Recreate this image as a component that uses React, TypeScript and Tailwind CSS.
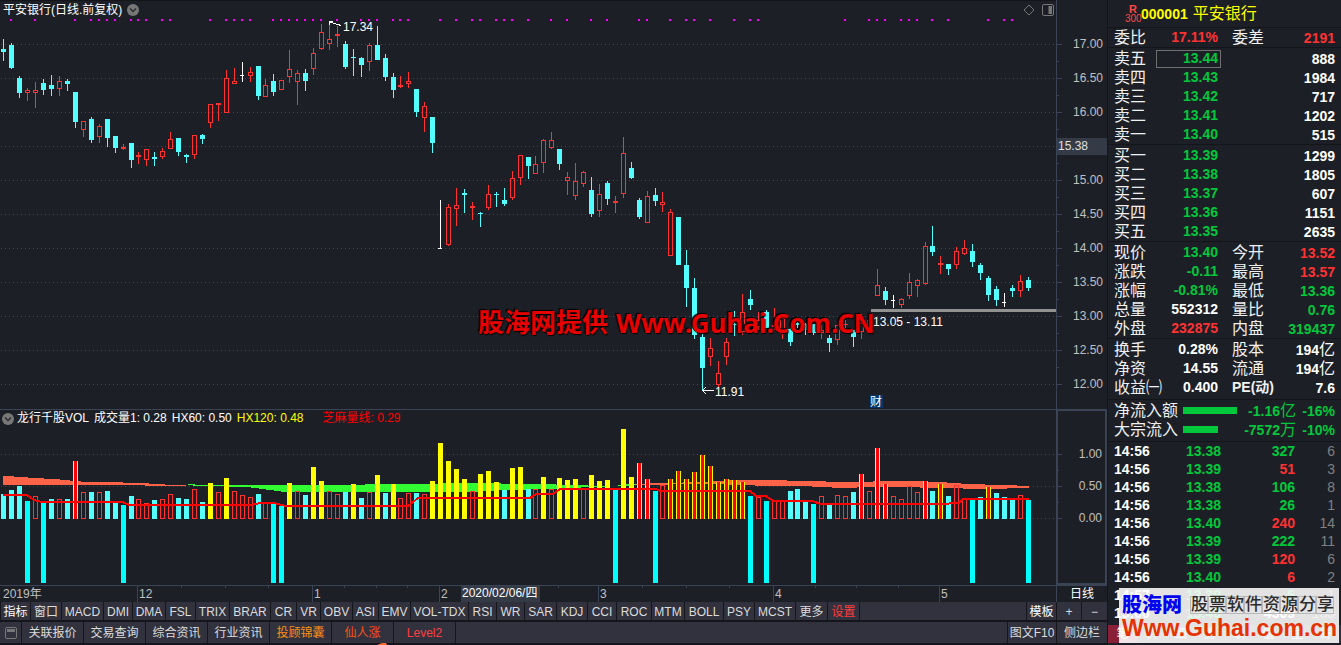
import clsx from "clsx";

type Kind = "c" | "r" | "w";
type Candle = [high: number, top: number, bottom: number, low: number, kind: Kind];

const CANDLES: Candle[] = [
  [39, 49, 52, 61, "c"], [43, 45, 68, 69, "c"], [76, 78, 93, 98, "c"], [88, 90, 93, 101, "r"],
  [82, 90, 93, 108, "r"], [79, 83, 90, 95, "c"], [75, 85, 89, 96, "c"], [76, 81, 89, 96, "r"],
  [79, 81, 84, 91, "c"], [92, 92, 122, 128, "c"], [121, 121, 130, 137, "r"], [117, 119, 140, 143, "c"],
  [124, 126, 137, 143, "r"], [119, 119, 138, 147, "c"], [136, 136, 148, 153, "c"], [144, 147, 149, 150, "r"],
  [143, 143, 160, 168, "c"], [152, 155, 157, 164, "r"], [149, 149, 160, 166, "r"], [152, 157, 159, 166, "c"],
  [148, 151, 157, 159, "r"], [132, 139, 149, 149, "r"], [138, 138, 152, 156, "c"], [154, 155, 157, 163, "c"],
  [135, 135, 155, 159, "r"], [134, 135, 139, 144, "c"], [104, 104, 123, 128, "r"], [103, 103, 105, 121, "r"],
  [70, 78, 113, 113, "r"], [68, 81, 84, 84, "r"], [62, 75, 76, 82, "w"], [67, 72, 76, 82, "r"],
  [66, 66, 96, 100, "c"], [79, 85, 97, 97, "r"], [74, 81, 92, 96, "c"], [80, 80, 90, 90, "r"],
  [50, 69, 77, 83, "r"], [70, 73, 82, 105, "r"], [69, 73, 81, 91, "c"], [48, 53, 69, 75, "r"],
  [24, 32, 49, 50, "r"], [24, 39, 44, 50, "r"], [26, 34, 36, 47, "r"], [41, 44, 67, 69, "c"],
  [49, 57, 58, 76, "c"], [57, 58, 65, 77, "c"], [43, 45, 62, 71, "r"], [26, 45, 60, 60, "c"],
  [54, 58, 77, 81, "c"], [73, 77, 90, 98, "c"], [76, 85, 87, 88, "r"], [72, 81, 84, 88, "r"],
  [89, 89, 112, 117, "c"], [102, 106, 118, 132, "r"], [117, 117, 143, 153, "c"], [200, 248, 249, 249, "w"],
  [204, 207, 245, 246, "r"], [188, 205, 209, 226, "r"], [189, 193, 195, 213, "c"], [202, 206, 208, 220, "r"],
  [212, 213, 214, 227, "c"], [185, 194, 208, 210, "r"], [192, 194, 195, 207, "c"], [188, 200, 204, 206, "c"],
  [171, 178, 198, 200, "r"], [155, 155, 178, 185, "r"], [157, 157, 166, 179, "c"], [156, 164, 174, 174, "r"],
  [139, 140, 163, 173, "r"], [132, 140, 148, 149, "r"], [149, 149, 164, 170, "c"], [172, 177, 181, 195, "r"],
  [163, 181, 196, 200, "r"], [171, 172, 184, 187, "r"], [177, 190, 214, 217, "c"], [184, 194, 211, 217, "r"],
  [181, 183, 199, 205, "c"], [196, 201, 203, 213, "r"], [137, 153, 194, 198, "r"], [162, 168, 178, 179, "c"],
  [198, 200, 217, 219, "c"], [191, 196, 223, 223, "r"], [188, 195, 201, 206, "c"], [192, 202, 205, 212, "r"],
  [209, 212, 256, 256, "r"], [217, 217, 265, 265, "c"], [250, 265, 288, 307, "c"], [278, 288, 335, 339, "c"],
  [333, 337, 368, 390, "c"], [338, 348, 357, 366, "r"], [361, 373, 385, 387, "r"], [338, 342, 357, 365, "r"],
  [311, 324, 325, 336, "c"], [294, 312, 332, 335, "r"], [290, 299, 305, 310, "c"], [312, 320, 327, 330, "r"],
  [310, 312, 328, 328, "c"], [308, 325, 327, 330, "r"], [318, 318, 334, 339, "r"], [328, 329, 342, 346, "c"],
  [322, 323, 325, 328, "c"], [323, 324, 330, 335, "c"], [324, 324, 333, 335, "c"], [325, 330, 333, 339, "r"],
  [335, 338, 343, 352, "c"], [325, 325, 340, 345, "r"], [320, 324, 325, 328, "r"], [330, 330, 337, 347, "c"],
  [314, 323, 332, 339, "r"], [318, 320, 330, 332, "r"], [269, 285, 296, 296, "r"], [287, 291, 300, 305, "c"],
  [295, 300, 301, 308, "w"], [298, 299, 305, 308, "r"], [273, 282, 296, 299, "r"], [279, 280, 286, 297, "r"],
  [242, 246, 284, 285, "r"], [226, 246, 252, 256, "c"], [256, 263, 265, 274, "r"], [264, 264, 269, 275, "c"],
  [247, 251, 265, 269, "r"], [240, 248, 254, 255, "r"], [244, 251, 262, 267, "c"], [263, 265, 273, 280, "c"],
  [276, 278, 295, 301, "c"], [286, 289, 300, 306, "c"], [293, 302, 303, 307, "w"], [285, 288, 291, 297, "c"],
  [275, 281, 291, 297, "r"], [277, 280, 288, 291, "c"],
];

// c cyan, r hollow red, y yellow, m yellow with red core, d long cyan bar below zero
const VOLUMES =
  "c84 c80 c76 d91 r86 d92 c89 r89 c89 m51 r82 c82 r82 c81 c92 d95 c86 r89 r93 c90 " +
  "r89 r84 c88 c89 r79 c92 y73 r82 y68 r81 r85 r87 c84 r93 d94 d96 y73 r81 c85 y57 " +
  "y71 r81 r84 c82 y74 c88 r82 y65 c83 y74 r88 r83 c83 r84 y71 y33 y51 y59 y69 r81 " +
  "y64 y61 y72 c80 y58 y57 c79 r79 y67 r79 y68 y70 y69 r79 y65 y71 y70 d79 y19 y67 " +
  "m53 m69 d81 r75 m69 m61 m69 m62 m45 m56 m72 m69 m70 m72 d86 r87 d91 r91 r91 c81 " +
  "c79 c92 d94 r86 c95 r85 r86 c82 m64 r81 m38 m74 r86 r89 r76 r82 m71 c81 m74 c86 " +
  "r75 r89 d89 c87 m77 c83 c87 c90 r85 d90";

const DOTS = [
  1, 4, 9, 11, 12, 13, 14, 16, 17, 18, 20, 21, 26, 28, 29, 30, 31, 34, 35, 36, 37, 38, 39, 40, 42,
  45, 46, 47, 49, 50, 51, 55, 57, 59, 60, 62, 63, 64, 66, 69, 71, 74, 76, 80, 81, 84, 86, 87, 89, 92,
  94, 95, 106, 109, 110, 111, 113, 114, 115, 117, 119, 124, 126, 127,
];

const COLORS = { c: "#54ffff", r: "#ff3232", w: "#ffffff" };
const barX = (i: number) => 3 + Math.floor(7.94 * i + 0.97);

const PRICES = ["17.00", "16.50", "16.00", "15.50", "15.00", "14.50", "14.00", "13.50", "13.00", "12.50", "12.00"];
const MONTHS = [
  { x: 137, label: "12" },
  { x: 312, label: "1" },
  { x: 439, label: "2" },
  { x: 598, label: "3" },
  { x: 773, label: "4" },
  { x: 939, label: "5" },
];
const WEEK_TICKS = [181, 225, 268, 344, 376, 407, 558, 642, 686, 729, 815, 856, 898];

const INDICATORS = [
  "指标", "窗口", "MACD", "DMI", "DMA", "FSL", "TRIX", "BRAR", "CR", "VR", "OBV", "ASI", "EMV", "VOL-TDX",
  "RSI", "WR", "SAR", "KDJ", "CCI", "ROC", "MTM", "BOLL", "PSY", "MCST", "更多", "设置",
];

const LINKS = [
  { label: "关联报价", tone: "text-[#dcdcdc]" },
  { label: "交易查询", tone: "text-[#dcdcdc]" },
  { label: "综合资讯", tone: "text-[#dcdcdc]" },
  { label: "行业资讯", tone: "text-[#dcdcdc]" },
  { label: "投顾锦囊", tone: "text-[#ff8c14]" },
  { label: "仙人涨", tone: "text-[#ff5014]" },
  { label: "Level2", tone: "text-[#ff4040]" },
];

const GREEN = "text-[#00c83c]";
const RED = "text-[#ff3232]";
const WHITE = "text-white";

type Row = { a: string; av: string; at: string; b?: string; bv: string; bt: string; boxed?: boolean };

const RATIO: Row[] = [{ a: "委比", av: "17.11%", at: RED, b: "委差", bv: "2191", bt: RED }];
const SELLS: Row[] = [
  { a: "卖五", av: "13.44", at: GREEN, bv: "888", bt: WHITE, boxed: true },
  { a: "卖四", av: "13.43", at: GREEN, bv: "1984", bt: WHITE },
  { a: "卖三", av: "13.42", at: GREEN, bv: "717", bt: WHITE },
  { a: "卖二", av: "13.41", at: GREEN, bv: "1202", bt: WHITE },
  { a: "卖一", av: "13.40", at: GREEN, bv: "515", bt: WHITE },
];
const BUYS: Row[] = [
  { a: "买一", av: "13.39", at: GREEN, bv: "1299", bt: WHITE },
  { a: "买二", av: "13.38", at: GREEN, bv: "1805", bt: WHITE },
  { a: "买三", av: "13.37", at: GREEN, bv: "607", bt: WHITE },
  { a: "买四", av: "13.36", at: GREEN, bv: "1151", bt: WHITE },
  { a: "买五", av: "13.35", at: GREEN, bv: "2635", bt: WHITE },
];
const QUOTES: Row[] = [
  { a: "现价", av: "13.40", at: GREEN, b: "今开", bv: "13.52", bt: RED },
  { a: "涨跌", av: "-0.11", at: GREEN, b: "最高", bv: "13.57", bt: RED },
  { a: "涨幅", av: "-0.81%", at: GREEN, b: "最低", bv: "13.36", bt: GREEN },
  { a: "总量", av: "552312", at: WHITE, b: "量比", bv: "0.76", bt: GREEN },
  { a: "外盘", av: "232875", at: RED, b: "内盘", bv: "319437", bt: GREEN },
];
const BASICS: Row[] = [
  { a: "换手", av: "0.28%", at: WHITE, b: "股本", bv: "194亿", bt: WHITE },
  { a: "净资", av: "14.55", at: WHITE, b: "流通", bv: "194亿", bt: WHITE },
  { a: "收益㈠", av: "0.400", at: WHITE, b: "PE(动)", bv: "7.6", bt: WHITE },
];

const TICKS = [
  ["14:56", "13.38", "327", "6", GREEN],
  ["14:56", "13.39", "51", "3", RED],
  ["14:56", "13.38", "106", "8", GREEN],
  ["14:56", "13.38", "26", "1", GREEN],
  ["14:56", "13.40", "240", "14", RED],
  ["14:56", "13.39", "222", "11", GREEN],
  ["14:56", "13.39", "120", "6", RED],
  ["14:56", "13.40", "6", "2", RED],
  ["14:57", "13.39", "5", "1", GREEN],
  ["15:00", "13.40", "4309", "133", WHITE],
];

// digits are bold, CJK units such as 亿 keep the regular weight
const Value = ({ text }: { text: string }) => {
  const unit = /[亿万]$/.test(text) ? text.slice(-1) : "";
  return (
    <>
      <span className="text-[14px] font-bold">{unit ? text.slice(0, -1) : text}</span>
      {unit && <span className="text-[16px]">{unit}</span>}
    </>
  );
};

const QuoteTable = ({ rows }: { rows: Row[] }) => (
  <table className="w-full table-fixed border-collapse">
    <colgroup>
      <col className="w-[42px]" />
      <col className="w-[65px]" />
      <col className="w-[56px]" />
      <col />
    </colgroup>
    <tbody>
      {rows.map((row) => (
        <tr key={row.a} className="h-[19px] leading-[17px]">
          <th scope="row" className="p-0 text-left text-[16px] font-normal whitespace-nowrap text-[#f0f0f0]">{row.a}</th>
          <td className="p-0 text-right">
            <div className={clsx("h-[18px] border pr-[2px] leading-[14px]", row.at, row.boxed ? "border-[#707070]" : "border-transparent")}>
              <Value text={row.av} />
            </div>
          </td>
          <td className={clsx("p-0 pl-[11px] whitespace-nowrap text-[#f0f0f0]", row.b?.startsWith("PE") ? "text-[14px] font-bold" : "text-[16px]")}>
            {row.b}
          </td>
          <td className={clsx("p-0 text-right whitespace-nowrap", row.bt)}>
            <Value text={row.bv} />
          </td>
        </tr>
      ))}
    </tbody>
  </table>
);

const Toggle = ({ label }: { label: string }) => (
  <button aria-label={label} className="shrink-0">
    <svg width="12" height="12" viewBox="0 0 12 12" className="block">
      <circle cx="6" cy="6" r="6" fill="#777777" />
      <path d="M3 4.5 6 7.5 9 4.5" fill="none" stroke="#2a2c33" strokeWidth="1.5" />
    </svg>
  </button>
);

const GridLine = ({ y }: { y: number }) => (
  <line x1="1" x2="100%" y1={y + 0.5} y2={y + 0.5} stroke="#444852" strokeDasharray="1 3" />
);

const PriceChart = () => (
  <svg className="block h-full w-full" shapeRendering="crispEdges">
    {PRICES.map((p, i) => <GridLine key={p} y={44 + i * 34} />)}
    {DOTS.map((i) => <rect key={i} x={barX(i) - 1} y="19" width="2" height="2" fill="#ff00ff" />)}
    {CANDLES.map(([high, top, bottom, low, kind], i) => {
      const x = barX(i);
      const color = COLORS[kind];
      const hollow = kind === "r" && bottom - top > 2;
      return (
        <g key={i} fill={color}>
          <rect x={x} y={high} width="1" height={top - high} />
          <rect x={x} y={bottom} width="1" height={low - bottom} />
          {hollow ? (
            <rect x={x - 1.5} y={top + 0.5} width="4" height={bottom - top - 1} fill="none" stroke={color} />
          ) : (
            <rect x={x - 2} y={top} width={kind === "w" ? 4 : 5} height={bottom - top} />
          )}
        </g>
      );
    })}
    <rect x="871" y="309" width="100%" height="3" fill="#919191" />
    <g stroke="#ffffff" fill="none">
      <path d="M329.5 25V21.5H333M330 22l11 3.5" />
      <path d="M702 390.5h12M706 387l-3.5 3.5 3.5 3.5" />
    </g>
    <g fill="#ffffff" fontSize="12">
      <text x="343" y="31">17.34</text>
      <text x="715" y="396">11.91</text>
      <text x="873" y="326">13.05 - 13.11</text>
      <rect x="870" y="395" width="13" height="13" fill="#06366b" />
      <text x="870" y="406">财</text>
    </g>
  </svg>
);

const VolumeChart = () => (
  <svg className="block h-full w-full" shapeRendering="crispEdges">
    {[44, 76, 108].map((y) => <GridLine key={y} y={y} />)}
    <polygon
      fill="#ff6347"
      points="3,66 24,67 32,68 56,69 64,70 87,72 103,72 143,73 155,74 175,75 186,75 186,76 150,76 140,75 3,75"
    />
    <polygon
      fill="#32ff32"
      points="186,75 190,74 200,75 365,75 365,74 443,74 443,73 501,73 501,74 556,74 556,75 585,75 590,76 615,76 625,74 640,74 640,75 625,76 590,77 555,79 505,80 470,82 450,82 420,82 285,82 270,80 247,77 200,76"
    />
    <polygon
      fill="#ff6347"
      points="636,74 660,73 706,72 733,70 787,70 787,71 826,71 826,72 873,72 873,71 914,71 932,72 961,73 961,74 985,74 985,75 1017,75 1017,76 1029,76 1029,78 985,79 898,77 872,77 842,78 802,76 755,76 755,75 700,74 636,75"
    />
    {VOLUMES.split(" ").map((v, i) => {
      const kind = v[0];
      const top = Number(v.slice(1));
      const x = barX(i) - 2;
      if (kind === "d") return <rect key={i} x={x} y={top} width="5" height={173 - top} fill="#00ffff" />;
      if (kind === "r")
        return <rect key={i} x={x + 0.5} y={top + 0.5} width="4" height={108 - top} fill="none" stroke="#ff3232" />;
      return (
        <g key={i}>
          <rect x={x} y={top} width="5" height={109 - top} fill={kind === "c" ? "#54ffff" : "#ffff00"} />
          {kind === "m" && <rect x={x + 1} y={top} width="3" height={109 - top} fill="#ff0000" />}
        </g>
      );
    })}
    <polyline
      fill="none"
      stroke="#ff0000"
      strokeWidth="2"
      points="3,85 27,85 34,90 42,92 122,92 130,95 252,95 260,93 274,93 286,96 408,96 418,88 530,88 536,84 553,84 560,79 656,79 660,81 750,81 756,86 766,86 773,91 813,91 820,94 947,94 951,93 959,93 963,89 1029,89"
    />
  </svg>
);

const PriceAxis = () => (
  <div className="relative w-[51px] shrink-0 border-l border-[#3a4454] pt-[27px] text-[12px] text-[#c0c0c0]">
    <svg className="absolute top-0 left-0 h-full w-[5px]" shapeRendering="crispEdges">
      {PRICES.map((p, i) => (
        <g key={p} fill="#3a4454">
          <rect y={44 + i * 34} width="5" height="1" />
          {i < 10 && <rect y={61 + i * 34} width="2" height="1" />}
        </g>
      ))}
    </svg>
    {PRICES.map((p) =>
      p === "15.50" ? (
        <div key={p} className="flex h-[34px] items-center">
          <span className="relative w-full bg-[#343a46] pl-px leading-[17px] text-[#e0e0e0]">15.38</span>
        </div>
      ) : (
        <div key={p} className="h-[34px] pr-[4px] text-right leading-[34px]">{p}</div>
      ),
    )}
  </div>
);

const VolumeAxis = () => (
  <div className="relative w-[51px] shrink-0 border-l border-[#3a4454]">
    <div className="h-full border-2 border-t border-l border-[#3a4454] pt-[27px] text-[12px] text-[#c0c0c0]">
      {["1.00", "0.50", "0.00"].map((v) => (
        <div key={v} className="h-[32px] pr-[3px] text-right leading-[32px]">{v}</div>
      ))}
    </div>
    <svg className="absolute top-0 left-0 h-full w-[5px]" shapeRendering="crispEdges">
      {[44, 76, 108].map((y) => <rect key={y} y={y} width="5" height="1" fill="#3a4454" />)}
      {[60, 92].map((y) => <rect key={y} y={y} width="2" height="1" fill="#3a4454" />)}
    </svg>
  </div>
);

const TimeAxis = () => (
  <div className="flex h-[17px] border-t border-[#3a4454] text-[12px]">
    <svg className="block h-full min-w-0 flex-1" shapeRendering="crispEdges">
      <text x="3" y="12" fill="#c0c0c0">2019年</text>
      {WEEK_TICKS.map((x) => <rect key={x} x={x} width="1" height="2" fill="#3a4454" />)}
      {MONTHS.map(({ x, label }) => (
        <g key={label}>
          <rect x={x} width="1" height="16" fill="#3a4454" />
          <text x={x + 2} y="12" fill="#c0c0c0">{label}</text>
        </g>
      ))}
      <rect x="461" width="79" height="16" fill="#343a46" />
      <text x="462" y="11" fill="#ffffff">2020/02/06/四</text>
    </svg>
    <div className="w-[51px] shrink-0 border-l border-[#3a4454] text-center leading-[16px] text-white">日线</div>
  </div>
);

const Toolbars = () => (
  <nav className="relative bg-[#15161b] pb-[2px] text-[12px] text-[#dcdcdc]">
    <div className="grid h-[18px] grid-cols-[29px_30px_41px_28px_32px_29px_33px_40px_25px_23px_31px_25px_31px_57px_27px_27px_31px_30px_28px_34px_32px_38px_30px_40px_31px_31px_1fr_29px_24px_25px] gap-px pl-px leading-[16px]">
      {INDICATORS.map((name) => (
        <button
          key={name}
          className={clsx(
            "bg-[#31323e] pt-[2px] whitespace-nowrap",
            name === "指标" && "text-white",
            name === "设置" && "text-[#ff3c3c]",
          )}
        >
          {name}
        </button>
      ))}
      <div className="bg-[#31323e]" />
      <button className="bg-[#31323e] pt-[2px] text-white">模板</button>
      <button className="bg-[#31323e] pt-[2px]">+</button>
      <button className="bg-[#31323e] pt-[2px]">−</button>
    </div>
    <div className="mt-[2px] flex h-[21px] gap-px leading-[19px]">
      <button aria-label="窗口" className="flex w-[21px] items-center justify-center bg-[#31323e]">
        <svg width="12" height="12" viewBox="0 0 12 12">
          <rect x="0.5" y="0.5" width="11" height="11" rx="1.5" fill="none" stroke="#777777" />
          <rect x="2" y="2" width="8" height="3" fill="#777777" />
        </svg>
      </button>
      {LINKS.map((l) => (
        <a key={l.label} href="#" className={clsx("w-[61px] bg-[#31323e] pt-[2px] text-center", l.tone)}>{l.label}</a>
      ))}
      <div className="flex-1 bg-[#31323e]" />
      <button className="w-[48px] bg-[#31323e] pt-[2px]">图文F10</button>
      <button className="w-[50px] bg-[#31323e] pt-[2px]">侧边栏</button>
    </div>
    <svg width="10" height="2" viewBox="0 0 10 2" className="absolute bottom-0 left-[377px]">
      <path d="M0 2 5 0H9L10 2Z" fill="#ff6a30" />
    </svg>
  </nav>
);

const FlowRow = ({ label, bar, amount, pct }: { label: string; bar: string; amount: string; pct: string }) => (
  <div className={clsx("flex h-[19px] items-center leading-[19px]", GREEN)}>
    <span className="w-[69px] text-[16px] text-[#f0f0f0]">{label}</span>
    <span className={clsx("h-[7px] bg-[#00c83c]", bar)} />
    <span className="flex-1 text-right whitespace-nowrap"><Value text={amount} /></span>
    <span className="w-[39px] text-right"><Value text={pct} /></span>
  </div>
);

const QuotePanel = () => (
  <aside className="relative w-[234px] shrink-0 border-l border-[#14151a]">
    <header className="flex h-[28px] items-center border-b border-[#14151a] pl-[17px] text-[16px] text-[#ffff00]">
      <div className="w-[16px] text-center text-[#ff4646]">
        <div className="text-[11px] leading-[10px] font-bold">R</div>
        <div className="text-[10px] leading-[9px]">300</div>
      </div>
      <h2 className="flex gap-[5px]">
        <span className="text-[14px] leading-[24px] font-bold">000001</span>
        <span className="leading-[24px]">平安银行</span>
      </h2>
    </header>
    <div className="border-b border-[#14151a] px-[6px]"><QuoteTable rows={RATIO} /></div>
    <div className="border-b border-[#14151a] px-[6px] pt-px"><QuoteTable rows={SELLS} /></div>
    <div className="border-b border-[#14151a] px-[6px] pt-px"><QuoteTable rows={BUYS} /></div>
    <div className="border-b border-[#14151a] px-[6px] pt-px"><QuoteTable rows={QUOTES} /></div>
    <div className="border-b border-[#14151a] px-[6px] pt-px pb-[2px]"><QuoteTable rows={BASICS} /></div>
    <div className="border-b border-[#14151a] px-[6px] pt-px pb-[2px]">
      <FlowRow label="净流入额" bar="w-[54px]" amount="-1.16亿" pct="-16%" />
      <FlowRow label="大宗流入" bar="w-[35px]" amount="-7572万" pct="-10%" />
    </div>
    <table className="mx-[6px] w-[221px] table-fixed border-collapse text-[14px] leading-[18px]">
      <tbody>
        {TICKS.map(([time, price, volume, count, tone], i) => (
          <tr key={i} className="h-[18px]">
            <td className="w-[42px] p-0 font-bold text-white">{time}</td>
            <td className={clsx("w-[65px] p-0 text-right font-bold", GREEN)}>{price}</td>
            <td className={clsx("w-[74px] p-0 text-right font-bold", tone)}>{volume}</td>
            <td className="p-0 text-right text-[#808080]">{count}</td>
          </tr>
        ))}
      </tbody>
    </table>
    <div className="mt-[3px] grid h-[18px] grid-cols-8 bg-[#31323e] text-[12px] leading-[18px] text-[#dcdcdc]">
      {["笔", "价", "细", "势", "联", "值", "主", "筹"].map((t, i) => (
        <button key={t} className={clsx(i === 0 && "bg-[#8a2038] text-white")}>{t}</button>
      ))}
    </div>
    <div className="absolute right-[2px] bottom-[2px] h-[55px] w-[220px] bg-white/88 pt-[5px] pl-[3px] whitespace-nowrap">
      <div className="flex h-[24px] items-center gap-[8px]">
        <span className="text-[20px] leading-[24px] font-black text-[#0000ee]">股海网</span>
        <span className="flex text-[17px] leading-[18px] font-medium text-[#2c2c2c]">
          {[..."股票软件资源分享"].map((ch) => (
            <span key={ch} className="w-[18px] border border-[#b8b8b8] text-center leading-[16px]">{ch}</span>
          ))}
        </span>
      </div>
      <div className="text-[23px] leading-[22px] font-bold text-[#e63200]">Www.Guhai.com.cn</div>
    </div>
  </aside>
);

export default function App() {
  return (
    <div className="flex min-h-screen bg-[#1c1f26] font-['Liberation_Sans','Noto_Sans_CJK_SC',sans-serif]">
      <main className="flex min-w-0 flex-1 flex-col">
        <section className="flex h-[409px]">
          <div className="relative min-w-0 flex-1 border-t border-[#14151a]">
            <div className="absolute inset-0 -top-px"><PriceChart /></div>
            <div className="absolute top-0 left-[3px] flex items-center gap-[5px]">
              <h1 className="text-[12px] leading-[18px] text-white">平安银行(日线.前复权)</h1>
              <Toggle label="切换周期" />
            </div>
            <div className="absolute top-[3px] right-[2px] flex items-center gap-[7px]">
              <svg width="12" height="12" viewBox="0 0 12 12" fill="none" stroke="#777777">
                <path d="M6 1 11 6 6 11 1 6Z" />
              </svg>
              <svg width="12" height="12" viewBox="0 0 12 12" fill="none" stroke="#777777">
                <rect x="0.5" y="0.5" width="11" height="11" rx="1.5" />
                <rect x="7" y="2.5" width="2.5" height="7" fill="#777777" />
              </svg>
            </div>
            <div className="absolute top-[304px] left-[478px] flex items-center gap-[8px] leading-[36px] font-bold whitespace-nowrap text-[#e60000] [text-shadow:1px_1px_1px_#000,-1px_-1px_1px_#000]">
              <span className="text-[26px]">股海网提供</span>
              <span className="font-['Noto_Sans',sans-serif] text-[26px]">Www.Guhai.Com.CN</span>
            </div>
          </div>
          <PriceAxis />
        </section>
        <section className="flex h-[176px] border-t border-[#3a4454]">
          <div className="relative min-w-0 flex-1">
            <VolumeChart />
            <div className="absolute top-0 left-[2px] flex items-center gap-[5px] text-[12px] leading-[17px] whitespace-nowrap text-white">
              <div className="flex items-center gap-[3px]">
                <Toggle label="切换指标" />
                <h2>龙行千股VOL</h2>
              </div>
              <span>成交量1: 0.28</span>
              <span>HX60: 0.50</span>
              <span className="text-[#ffff00]">HX120: 0.48</span>
              <span className="ml-[14px] text-[#ff0000]">芝麻量线: 0.29</span>
            </div>
          </div>
          <VolumeAxis />
        </section>
        <TimeAxis />
        <Toolbars />
      </main>
      <QuotePanel />
    </div>
  );
}
